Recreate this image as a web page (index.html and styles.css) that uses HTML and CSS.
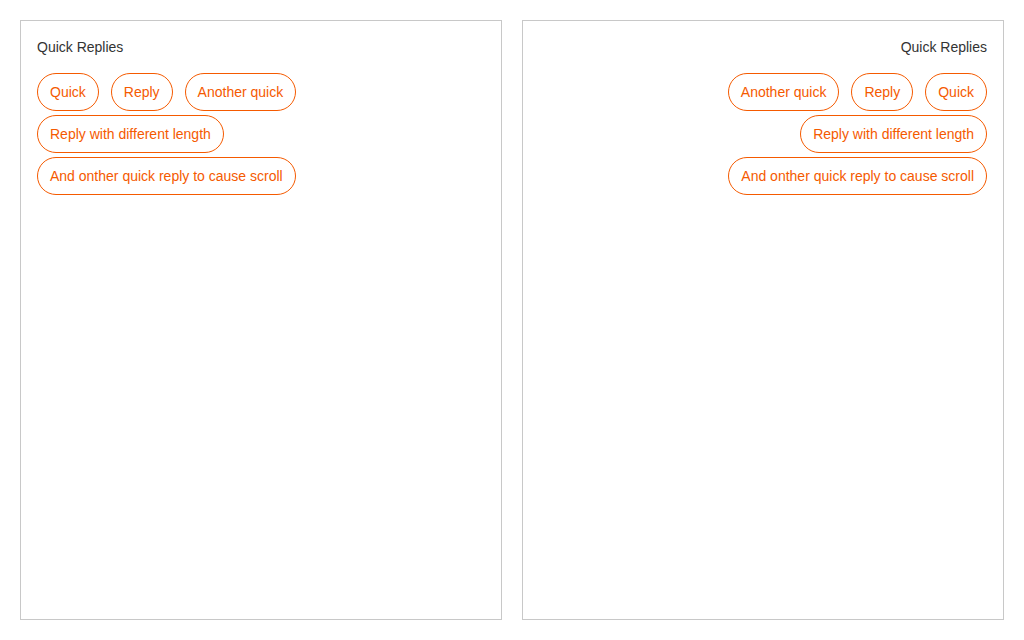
FILE: index.html
```html
<!DOCTYPE html>
<html>
<head>
<meta charset="utf-8">
<link rel="stylesheet" href="styles.css">
</head>
<body>
<div class="page">
  <section class="panel">
    <div class="title">Quick Replies</div>
    <div class="replies">
      <button class="chip">Quick</button>
      <button class="chip">Reply</button>
      <button class="chip">Another quick</button>
      <button class="chip">Reply with different length</button>
      <button class="chip">And onther quick reply to cause scroll</button>
    </div>
  </section>
  <section class="panel panel-right">
    <div class="title">Quick Replies</div>
    <div class="replies">
      <button class="chip">Quick</button>
      <button class="chip">Reply</button>
      <button class="chip">Another quick</button>
      <button class="chip">Reply with different length</button>
      <button class="chip">And onther quick reply to cause scroll</button>
    </div>
  </section>
</div>
</body>
</html>
```
FILE: styles.css
```css
html, body {
  margin: 0;
  padding: 0;
  background: #fff;
}
body {
  font-family: "Liberation Sans", Arial, sans-serif;
  padding: 20px;
}
.page {
  display: flex;
  gap: 20px;
}
.panel {
  box-sizing: border-box;
  width: 482px;
  height: 600px;
  border: 1px solid #c8c8c8;
  padding: 16px;
}
.title {
  font-size: 14px;
  line-height: 20px;
  color: #333;
  margin-bottom: 16px;
}
.replies {
  display: flex;
  flex-wrap: wrap;
  gap: 4px 12px;
}
.chip {
  font-family: "Liberation Sans", Arial, sans-serif;
  font-size: 14px;
  line-height: 16px;
  color: #f55a00;
  background: #fff;
  border: 1px solid #f55a00;
  border-radius: 19px;
  padding: 10px 12px;
  height: 38px;
  box-sizing: border-box;
  white-space: nowrap;
  cursor: pointer;
}
.panel-right .title {
  text-align: right;
}
.panel-right .replies {
  flex-direction: row-reverse;
}
```
